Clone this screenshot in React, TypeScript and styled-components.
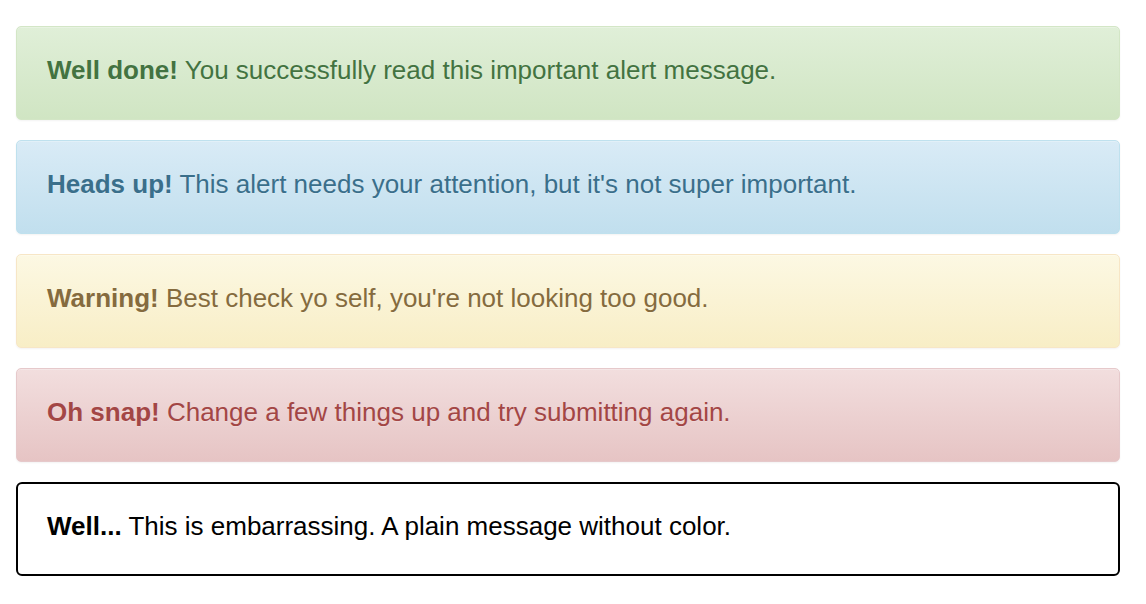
import React from "react";
import styled, { createGlobalStyle } from "styled-components";

const Global = createGlobalStyle`
  html, body { margin: 0; padding: 0; background: #fff; }
  body { font-family: "Liberation Sans", Arial, Helvetica, sans-serif; }
`;

type Variant = "success" | "info" | "warning" | "danger" | "plain";

const palette: Record<Variant, { from: string; to: string; border: string; color: string; bw: number; radius: number }> = {
  success: { from: "#e0efd8", to: "#d0e5c3", border: "#d3e6c6", color: "#437341", bw: 1, radius: 5 },
  info: { from: "#d9ebf6", to: "#c1dfee", border: "#bfe1ee", color: "#3a6f8b", bw: 1, radius: 5 },
  warning: { from: "#fcf8e3", to: "#f8eec6", border: "#f7e6c6", color: "#856b3e", bw: 1, radius: 5 },
  danger: { from: "#f2dede", to: "#e6c4c4", border: "#e6c9cb", color: "#a34645", bw: 1, radius: 5 },
  plain: { from: "#ffffff", to: "#ffffff", border: "#000000", color: "#000000", bw: 2, radius: 6 },
};

const Page = styled.main`
  display: flex;
  flex-direction: column;
  gap: 20px;
  width: 1104px;
  padding: 26px 0 0 16px;
`;

const Alert = styled.div<{ $v: Variant }>`
  box-sizing: border-box;
  height: 94px;
  display: flex;
  align-items: center;
  padding: 0 ${(p) => 31 - palette[p.$v].bw}px 7px;
  border: ${(p) => palette[p.$v].bw}px solid ${(p) => palette[p.$v].border};
  border-radius: ${(p) => palette[p.$v].radius}px;
  background: linear-gradient(to bottom, ${(p) => palette[p.$v].from} 0%, ${(p) => palette[p.$v].to} 100%);
  color: ${(p) => palette[p.$v].color};
  font-size: 26px;
  line-height: 30px;
  box-shadow: ${(p) => (p.$v === "plain" ? "none" : "inset 0 1px 0 rgba(255,255,255,.25), 0 1px 2px rgba(0,0,0,.05)")};
  text-shadow: ${(p) => (p.$v === "plain" ? "none" : "0 1px 0 rgba(255,255,255,.2)")};
`;

const Lead = styled.strong`
  font-weight: 700;
`;

const items: { v: Variant; lead: string; text: string }[] = [
  { v: "success", lead: "Well done!", text: "You successfully read this important alert message." },
  { v: "info", lead: "Heads up!", text: "This alert needs your attention, but it's not super important." },
  { v: "warning", lead: "Warning!", text: "Best check yo self, you're not looking too good." },
  { v: "danger", lead: "Oh snap!", text: "Change a few things up and try submitting again." },
  { v: "plain", lead: "Well...", text: "This is embarrassing. A plain message without color." },
];

export default function App() {
  return (
    <>
      <Global />
      <Page>
        {items.map((it) => (
          <Alert key={it.v} $v={it.v}>
            <span>
              <Lead>{it.lead}</Lead> {it.text}
            </span>
          </Alert>
        ))}
      </Page>
    </>
  );
}
